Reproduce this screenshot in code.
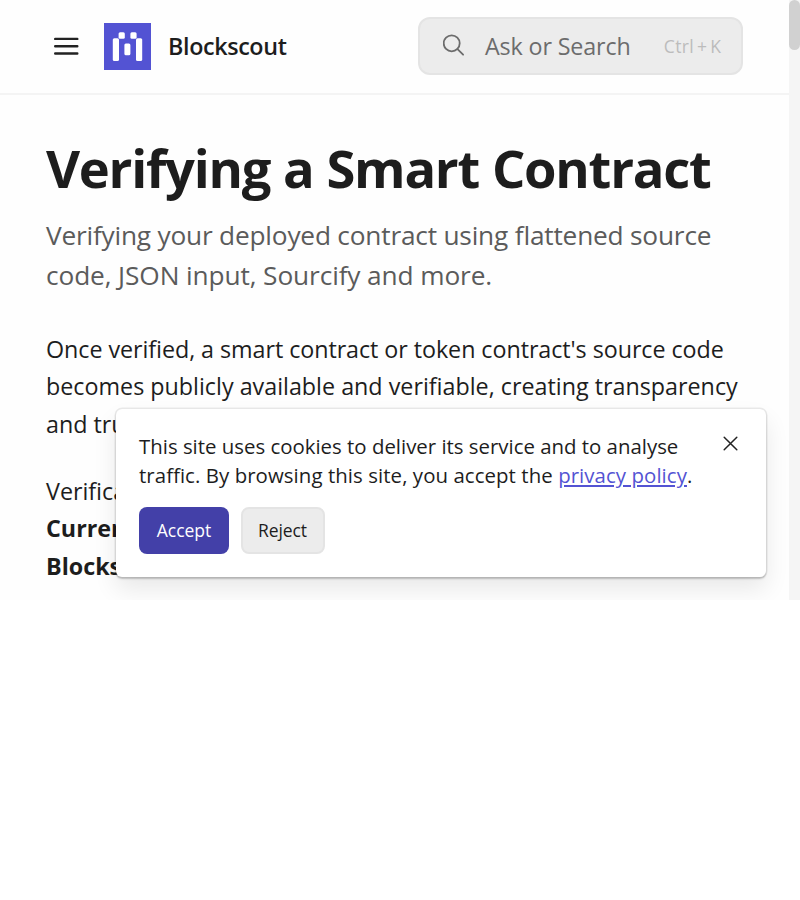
<main class="viewport">
  <div class="page">
    <header>
      <svg class="menu" viewBox="0 0 26 20"><path d="M2.2 2.9H24.3M2.2 10.2H24.3M2.2 17.5H24.3" stroke="#222" stroke-width="2.4" stroke-linecap="round" /></svg>
      <svg class="logo" viewBox="0 0 47 47">
        <rect width="47" height="47" fill="#5353d3" />
        <g fill="#fff">
          <rect x="8.8" y="15.2" width="6.2" height="22.8" rx="1.5" />
          <rect x="14.6" y="9.2" width="6.2" height="6.6" rx="1.5" />
          <rect x="20.4" y="20.4" width="6" height="11.8" rx="1.5" />
          <rect x="26.4" y="9.2" width="6.2" height="6.6" rx="1.5" />
          <rect x="32" y="15.2" width="6.2" height="22.8" rx="1.5" />
        </g>
      </svg>
      <span class="brand">Blockscout</span>
      <div class="search">
        <svg viewBox="0 0 22 22" fill="none" stroke="#6c6c6c" stroke-width="1.8" stroke-linecap="round"><circle cx="8.7" cy="9.3" r="8" /><path d="M14.5 15.1L20.1 20.7" /></svg>
        <span class="ask">Ask or Search</span>
        <span class="keys">Ctrl + K</span>
      </div>
    </header>
    <article>
      <h1>Verifying a Smart Contract</h1>
      <p class="lead"><span class="tight">Verifying your deployed contract using flattened source</span><br />code, JSON input, Sourcify and more.</p>
      <p class="body"><span class="snug">Once verified, a smart contract or token contract's source code</span><br />becomes publicly available and verifiable, creating transparency<br />and trust.</p>
      <p class="body second">Verifica<br /><b>Current</b><br /><b>Blocks</b></p>
    </article>
  </div>
  <div class="scrollbar"><div class="thumb"></div></div>
  <div class="cookie" role="dialog" aria-label="Cookies">
    <p>This site uses cookies to deliver its service and to analyse<br /><span class="loose">traffic. By browsing this site, you accept the <a href="#privacy">privacy policy</a>.</span></p>
    <svg class="close" viewBox="0 0 15 15"><path d="M1.2 1.2L13.8 13.8M13.8 1.2L1.2 13.8" stroke="#222" stroke-width="1.5" stroke-linecap="round" /></svg>
    <div class="actions">
      <button class="accept">Accept</button>
      <button class="reject">Reject</button>
    </div>
  </div>
</main>

<style>
  :global(body) { background: #fff; }
  .viewport {
    position: relative; display: flex; width: 800px; height: 600px; overflow: hidden;
    font-family: "Open Sans", "Noto Sans", sans-serif; color: #1d1d1d; white-space: nowrap;
    font-feature-settings: "liga" 1;
  }
  .page { width: 789px; flex: none; background: #fefefe; }
  header {
    display: flex; align-items: center; box-sizing: border-box; height: 95px;
    padding: 0 46px 2px 53px; border-bottom: 2px solid #f4f4f4;
  }
  .menu { width: 26px; height: 20px; }
  .logo { width: 47px; height: 47px; margin-left: 25px; margin-top: 1px; }
  .brand { margin-left: 17px; font-size: 23.3px; font-weight: 600; letter-spacing: -.36px; }
  .search {
    display: flex; align-items: center; box-sizing: border-box; width: 325px; height: 58px;
    margin-left: auto; padding: 0 19.6px 0 23px; border: 2px solid #e4e4e4; border-radius: 12px;
    background: #ececec; color: #6c6c6c; font-size: 23.3px;
  }
  .search svg { width: 22px; height: 22px; margin-top: -1px; }
  .ask { margin-left: 20px; letter-spacing: -.14px; }
  .keys { margin-left: auto; font-size: 17.5px; letter-spacing: .4px; word-spacing: -2.1px; color: #bcbcbc; }
  article { padding: 43px 46px 0; }
  h1 { margin: 0; font-size: 52.5px; line-height: 60px; font-weight: 700; letter-spacing: -1.26px; word-spacing: .6px; }
  p { margin: 0; }
  .lead { margin-top: 17px; font-size: 26.25px; line-height: 40px; letter-spacing: -.11px; color: #5b5b5b; }
  .tight { letter-spacing: -.2px; }
  .body { margin-top: 36px; font-size: 23.3px; line-height: 37.4px; }
  .snug { letter-spacing: -.06px; }
  .second { margin-top: 29.8px; }
  .scrollbar { width: 11px; background: #f5f5f5; }
  .thumb { height: 50px; border-radius: 6px; background: #d1d1d1; }
  .cookie {
    position: absolute; left: 116px; top: 409px; box-sizing: border-box; width: 650px; height: 168px;
    padding: 23px; border-radius: 6px; background: #fff;
    box-shadow: 0 0 0 1.5px rgba(0,0,0,.07), 0 1.5px 2px rgba(0,0,0,.18), 0 12px 24px rgba(0,0,0,.09);
  }
  .cookie p { font-size: 20.4px; line-height: 29px; }
  .loose { letter-spacing: .075px; }
  a { color: #5353d3; text-decoration-thickness: 2px; text-underline-offset: 2px; }
  .close { position: absolute; right: 28px; top: 27px; width: 15px; height: 15px; }
  .actions { display: flex; gap: 12px; margin-top: 17px; }
  button {
    box-sizing: border-box; height: 47px; padding: 0 0 2px; border-radius: 8px;
    font: 17.5px "Open Sans", "Noto Sans", sans-serif;
  }
  .accept { width: 90px; border: 0; background: #4340a8; color: #fefefe; }
  .reject { width: 84px; padding-right: 1px; border: 2px solid #e4e4e4; background: #ececec; color: #1d1d1d; letter-spacing: -.1px; }
</style>
